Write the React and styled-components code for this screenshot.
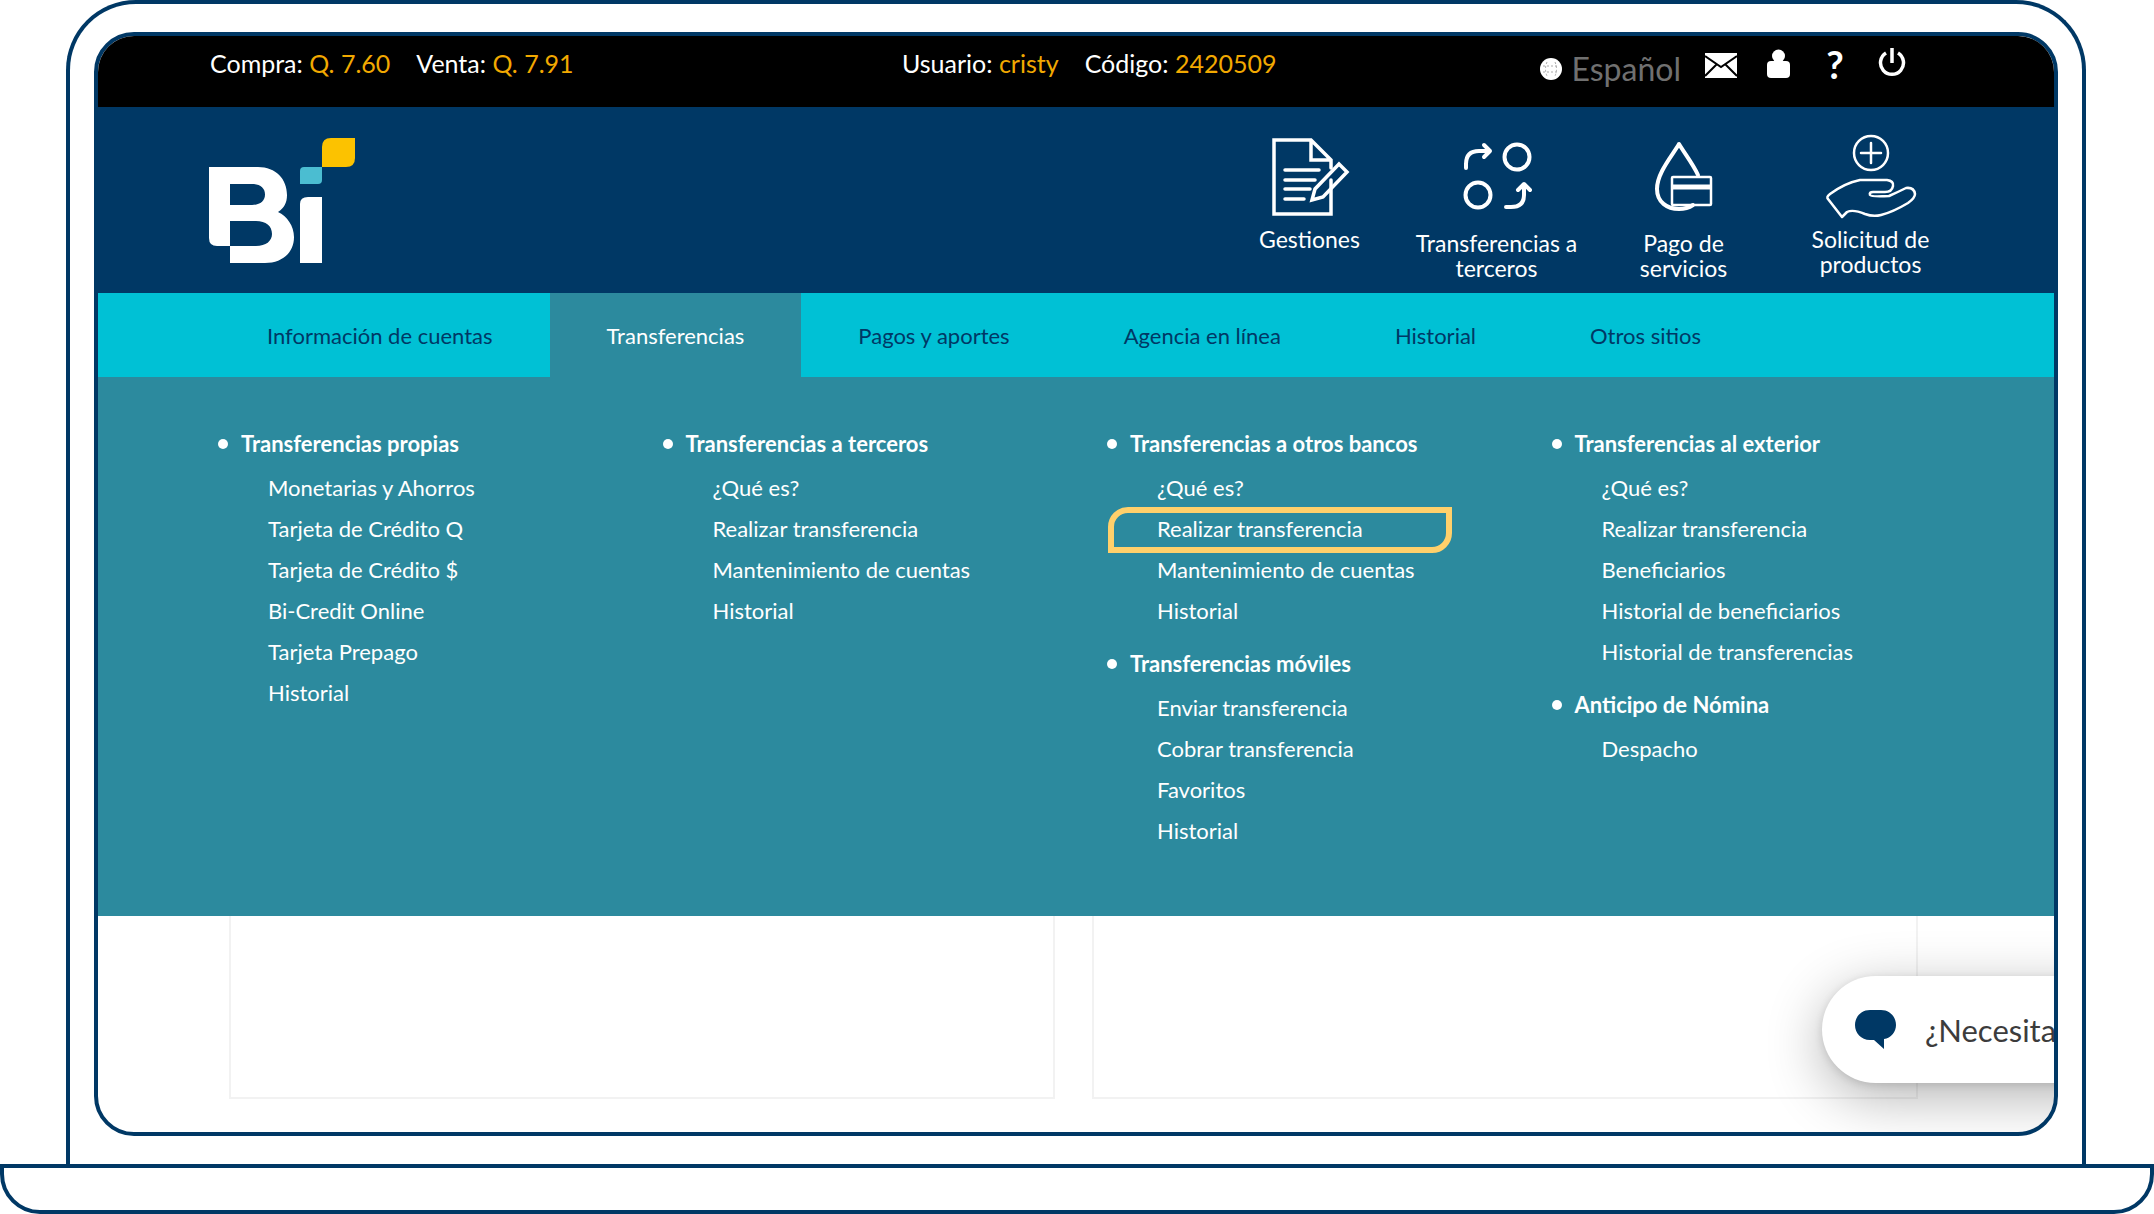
import React from "react";
import styled, { createGlobalStyle } from "styled-components";

const navy = "#003865";
const teal = "#2c8a9e";
const cyan = "#00c1d5";

const Global = createGlobalStyle`
  *, *::before, *::after { box-sizing: border-box; }
  html, body { margin: 0; background: #fff; }
  body { font-family: Lato, "Liberation Sans", sans-serif; color: #fff; }
  button { font: inherit; color: inherit; background: none; border: 0; padding: 0; cursor: pointer; }
  a { color: inherit; text-decoration: none; }
  ul { list-style: none; margin: 0; padding: 0; }
`;

const Laptop = styled.div`
  display: flex;
  flex-direction: column;
`;

const Lid = styled.div`
  margin: 0 68px 0 66px;
  padding: 28px 24px;
  border: 4px solid ${navy};
  border-bottom: 0;
  border-radius: 70px 70px 0 0;
`;

const Base = styled.div`
  height: 50px;
  border: 4px solid ${navy};
  border-radius: 0 0 40px 40px;
`;

const Screen = styled.div`
  position: relative;
  overflow: hidden;
  border: 4px solid ${navy};
  border-radius: 40px;
  background: #fff;
`;

const TopBar = styled.div`
  display: grid;
  grid-template-columns: 692px 1fr auto;
  height: 71px;
  padding: 0 146px 0 112px;
  background: #000;
  font-size: 25px;
  line-height: 30px;
`;

const Facts = styled.div`
  display: flex;
  gap: 26px;
  padding-top: 12px;
`;

const Value = styled.span`
  color: #f2a900;
`;

const Tools = styled.div`
  display: flex;
  align-items: flex-start;
  padding-top: 11px;
`;

const Language = styled.button`
  display: flex;
  align-items: center;
  gap: 10px;
  height: 44px;
  margin-right: 24px;
  && { color: #707070; font-size: 32px; }
`;

const Tool = styled.button`
  display: flex;
  align-items: center;
  justify-content: center;
  height: 34px;
  width: 32px;
  margin-left: ${(p) => p.$gap || 0}px;
  && { font-size: 38px; font-weight: 700; line-height: 34px; }
`;

const Header = styled.header`
  display: flex;
  justify-content: space-between;
  height: 186px;
  padding: 30px 90px 0 110px;
  background: ${navy};
`;

const Shortcuts = styled.nav`
  display: flex;
`;

const Shortcut = styled.a`
  display: flex;
  flex-direction: column;
  align-items: center;
  width: 187px;
  font-size: 23px;
  line-height: 25px;
  text-align: center;

  svg { height: ${(p) => p.$iconHeight}px; width: 96px; margin-top: -6px; }
  span { max-width: 170px; }
`;

const Tabs = styled.nav`
  display: flex;
  height: 84px;
  padding: 0 112px;
  background: ${cyan};
`;

const Tab = styled.a`
  display: flex;
  align-items: center;
  padding: 0 57px;
  font-size: 22px;
  color: ${(p) => (p.$active ? "#fff" : navy)};
  background: ${(p) => (p.$active ? teal : "transparent")};
`;

const Menu = styled.div`
  display: grid;
  grid-template-columns: repeat(4, 1fr);
  padding: 46px 89px 53px;
  background: ${teal};
`;

const Column = styled.div`
  padding-left: 30px;
`;

const Group = styled.section`
  padding-bottom: 12px;
`;

const GroupTitle = styled.h2`
  display: flex;
  align-items: center;
  gap: 13px;
  margin: 0 0 3px;
  font-size: 22px;
  font-weight: 700;
  line-height: 41px;

  &::before {
    content: "";
    width: 10px;
    height: 10px;
    margin-left: 1px;
    border-radius: 50%;
    background: #fff;
  }
`;

const MenuLink = styled.a`
  position: relative;
  display: block;
  padding-left: 51px;
  font-size: 22px;
  line-height: 41px;

  ${(p) =>
    p.$marked &&
    `&::after {
      content: "";
      position: absolute;
      inset: -1px auto -4px 2px;
      width: 344px;
      border: 6px solid #ffd06b;
      border-radius: 20px 0 20px 0;
    }`}
`;

const Panels = styled.main`
  display: grid;
  grid-template-columns: 1fr 1fr;
  gap: 37px;
  padding: 0 136px 33px 131px;
`;

const Panel = styled.section`
  height: 183px;
  border: 2px solid #f2f2f2;
  border-top: 0;
`;

const Chat = styled.button`
  position: absolute;
  right: -148px;
  bottom: 49px;
  display: flex;
  align-items: center;
  gap: 29px;
  width: 380px;
  height: 107px;
  && { padding-left: 33px; background: #fff; color: #3c3c3c; font-size: 31px; }
  border-radius: 54px;
  box-shadow: 0 14px 56px rgba(0, 0, 0, 0.3), 0 2px 8px rgba(0, 0, 0, 0.12);
`;

const Logo = () => (
  <svg width="148" height="130" viewBox="0 0 148 130" aria-label="Bi" role="img">
    <path
      fill="#fff"
      fillRule="evenodd"
      d="M1 30H50C68 30 79 42 79 58C79 66 76 71 70 75C79 79 86 89 86 100C86 116 74 126 57 126H22V109H9Q1 109 1 101ZM22 47V68H44C52 68 57 64 57 57.500C57 51 52 47 44 47ZM22 84V109H48C58 109 64 104 64 97C64 89 58 84 48 84Z"
    />
    <path fill="#fff" d="M92 126V67Q92 60 100 60H114V126Z" />
    <path fill="#4bbdd1" d="M92 47V34Q92 30 96 30H114V43Q114 47 110 47Z" />
    <path fill="#fcc200" d="M114 30V10Q114 1 123 1H147V21Q147 30 138 30Z" />
  </svg>
);

const stroke = { fill: "none", stroke: "#fff", strokeLinecap: "round", strokeLinejoin: "round" };

const DocumentIcon = () => (
  <svg viewBox="0 0 96 96" {...stroke} strokeWidth="3.500">
    <path d="M69 49V83H12V9H49L69 29V37M49 9V29H69" strokeLinejoin="miter" />
    <path d="M23 39H57M23 49H53M23 58H48M23 68H42" />
    <path d="M50 69L53 58L77 33L85 41L61 66Z" strokeLinejoin="miter" />
  </svg>
);

const TransferIcon = () => (
  <svg viewBox="0 0 96 96" {...stroke} strokeWidth="4">
    <circle cx="68" cy="24" r="12.500" />
    <circle cx="29" cy="62" r="12.500" />
    <path d="M17 35V31Q17 18 30 18H41M35 12L41 18L35 24" />
    <path d="M57 74H62Q75 74 75 62V52M69 57L75 51L81 57" />
  </svg>
);

const DropIcon = () => (
  <svg viewBox="0 0 96 96" {...stroke} strokeWidth="3">
    <path d="M62 42C57 31 49 21 43 11C36 23 21 40 21 56C21 69 31 76 43 76Q51 76 57 72" strokeWidth="4" />
    <rect x="36" y="44" width="39" height="28" rx="1" strokeWidth="2.500" />
    <path d="M37 54H74" strokeWidth="5" strokeLinecap="butt" />
  </svg>
);

const HandIcon = () => (
  <svg viewBox="0 0 96 96" {...stroke} strokeWidth="2.500">
    <circle cx="48" cy="22" r="17" />
    <path d="M48 12V32M38 22H58" />
    <path d="M37 49H64Q71 50 70 55Q69 61 62 61H50Q46 61 47 64Q48 66 66 65Q75 61 83 57Q91 56 92 63Q92 67 85 72Q70 81 58 84Q50 86 42 83Q30 78 24 81L19 86L5 68Q3 66 7 63Q22 52 37 49Z" />
  </svg>
);

const GlobeIcon = () => (
  <svg width="22" height="22" viewBox="0 0 22 22">
    <circle cx="11" cy="11" r="11" fill="#fff" />
    <path d="M3 8H19M3 14H19M7 4Q4 11 7 18M15 4Q18 11 15 18" stroke="#aaa" strokeDasharray="2 2" fill="none" />
  </svg>
);

const MailIcon = () => (
  <svg width="32" height="28" viewBox="0 0 32 28">
    <path fill="#fff" d="M0 3H32V28H0Z" />
    <path d="M0 6L16 17L32 6M0 26L12 14M32 26L20 14" stroke="#000" strokeWidth="2" fill="none" />
  </svg>
);

const PersonIcon = () => (
  <svg width="23" height="30" viewBox="0 0 23 30" fill="#fff">
    <circle cx="11.500" cy="7" r="6.500" />
    <rect y="12" width="23" height="17" rx="4" />
  </svg>
);

const PowerIcon = () => (
  <svg width="28" height="32" viewBox="0 0 28 32" {...stroke} strokeWidth="3.500">
    <path d="M8 5A11.500 11.500 0 1 0 20 5M14 0V15" strokeLinecap="butt" />
  </svg>
);

const BubbleIcon = () => (
  <svg width="41" height="39" viewBox="0 0 41 39" fill={navy}>
    <path d="M15 0H26C35 0 41 7 41 15C41 22 36 28 29 29V39L19 30H15C6 30 0 23 0 15C0 7 6 0 15 0Z" />
  </svg>
);

const shortcuts = [
  { label: "Gestiones", icon: DocumentIcon, height: 96 },
  { label: "Transferencias a terceros", icon: TransferIcon, height: 100 },
  { label: "Pago de servicios", icon: DropIcon, height: 100 },
  { label: "Solicitud de productos", icon: HandIcon, height: 96 },
];

const tabs = ["Información de cuentas", "Transferencias", "Pagos y aportes", "Agencia en línea", "Historial", "Otros sitios"];

const columns = [
  [
    {
      title: "Transferencias propias",
      links: ["Monetarias y Ahorros", "Tarjeta de Crédito Q", "Tarjeta de Crédito $", "Bi-Credit Online", "Tarjeta Prepago", "Historial"],
    },
  ],
  [
    {
      title: "Transferencias a terceros",
      links: ["¿Qué es?", "Realizar transferencia", "Mantenimiento de cuentas", "Historial"],
    },
  ],
  [
    {
      title: "Transferencias a otros bancos",
      links: ["¿Qué es?", "Realizar transferencia", "Mantenimiento de cuentas", "Historial"],
      marked: "Realizar transferencia",
    },
    {
      title: "Transferencias móviles",
      links: ["Enviar transferencia", "Cobrar transferencia", "Favoritos", "Historial"],
    },
  ],
  [
    {
      title: "Transferencias al exterior",
      links: ["¿Qué es?", "Realizar transferencia", "Beneficiarios", "Historial de beneficiarios", "Historial de transferencias"],
    },
    { title: "Anticipo de Nómina", links: ["Despacho"] },
  ],
];

export default function App() {
  return (
    <Laptop>
      <Global />
      <Lid>
        <Screen>
          <TopBar>
            <Facts>
              <span>Compra: <Value>Q. 7.60</Value></span>
              <span>Venta: <Value>Q. 7.91</Value></span>
            </Facts>
            <Facts>
              <span>Usuario: <Value>cristy</Value></span>
              <span>Código: <Value>2420509</Value></span>
            </Facts>
            <Tools>
              <Language><GlobeIcon />Español</Language>
              <Tool aria-label="Mensajes"><MailIcon /></Tool>
              <Tool aria-label="Perfil" $gap={25}><PersonIcon /></Tool>
              <Tool aria-label="Ayuda" $gap={25}>?</Tool>
              <Tool aria-label="Salir" $gap={25}><PowerIcon /></Tool>
            </Tools>
          </TopBar>
          <Header>
            <Logo />
            <Shortcuts>
              {shortcuts.map(({ label, icon: Icon, height }) => (
                <Shortcut href="#" key={label} $iconHeight={height}>
                  <Icon />
                  <span>{label}</span>
                </Shortcut>
              ))}
            </Shortcuts>
          </Header>
          <Tabs>
            {tabs.map((tab) => (
              <Tab href="#" key={tab} $active={tab === "Transferencias"}>{tab}</Tab>
            ))}
          </Tabs>
          <Menu>
            {columns.map((groups) => (
              <Column key={groups[0].title}>
                {groups.map((group) => (
                  <Group key={group.title}>
                    <GroupTitle>{group.title}</GroupTitle>
                    <ul>
                      {group.links.map((link) => (
                        <li key={link}>
                          <MenuLink href="#" $marked={link === group.marked}>{link}</MenuLink>
                        </li>
                      ))}
                    </ul>
                  </Group>
                ))}
              </Column>
            ))}
          </Menu>
          <Panels>
            <Panel />
            <Panel />
          </Panels>
          <Chat><BubbleIcon />¿Necesita</Chat>
        </Screen>
      </Lid>
      <Base />
    </Laptop>
  );
}
